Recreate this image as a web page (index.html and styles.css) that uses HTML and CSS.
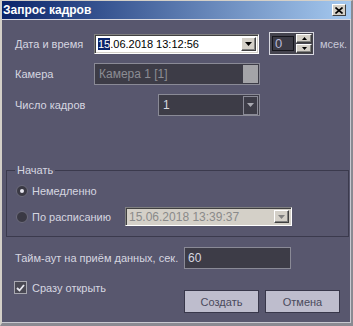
FILE: index.html
```html
<!DOCTYPE html>
<html lang="ru">
<head>
<meta charset="utf-8">
<title>Запрос кадров</title>
<link rel="stylesheet" href="styles.css">
</head>
<body>
<div class="window">
  <div class="titlebar">
    <span class="title">Запрос кадров</span>
    <span class="close"><svg width="8" height="7" viewBox="0 0 8 7"><path d="M0.5 0.5 L7.5 6.5 M7.5 0.5 L0.5 6.5" stroke="#000" stroke-width="1.6"/></svg></span>
  </div>
  <div class="content">
    <div class="row r1">
      <span class="lbl w79">Дата и время</span>
      <div class="combo date">
        <span class="val"><span class="sel">15</span>.06.2018 13:12:56</span>
        <span class="ddbtn raised"><svg width="7" height="4" viewBox="0 0 7 4"><path d="M0 0 H7 L3.5 4 Z" fill="#000"/></svg></span>
      </div>
      <div class="spin">
        <span class="spinval">0</span>
        <span class="spinbtns">
          <span class="sb raised"><svg width="5" height="3" viewBox="0 0 5 3"><path d="M0 3 H5 L2.5 0 Z" fill="#000"/></svg></span>
          <span class="sb raised"><svg width="5" height="3" viewBox="0 0 5 3"><path d="M0 0 H5 L2.5 3 Z" fill="#000"/></svg></span>
        </span>
      </div>
      <span class="unit">мсек.</span>
    </div>
    <div class="row r2">
      <span class="lbl w79">Камера</span>
      <div class="combo dark camera">
        <span class="val dim">Камера 1 [1]</span>
        <span class="grayblock"></span>
      </div>
    </div>
    <div class="row r3">
      <span class="lbl w143">Число кадров</span>
      <div class="combo dark count">
        <span class="val">1</span>
        <span class="ddbtn flat"><svg width="7" height="4" viewBox="0 0 7 4"><path d="M0 0 H7 L3.5 4 Z" fill="#a8a8b0"/></svg></span>
      </div>
    </div>
    <fieldset class="group">
      <legend>Начать</legend>
      <div class="row radiorow first">
        <span class="radio on"><span class="dot"></span></span>
        <span>Немедленно</span>
      </div>
      <div class="row radiorow second">
        <span class="radiolbl">
          <span class="radio"></span>
          <span>По расписанию</span>
        </span>
        <div class="combo disabled">
          <span class="val">15.06.2018 13:39:37</span>
          <span class="ddbtn raised"><svg width="7" height="4" viewBox="0 0 7 4"><path d="M0 0 H7 L3.5 4 Z" fill="#808080"/></svg></span>
        </div>
      </div>
    </fieldset>
    <div class="row r4">
      <span class="lbl w169">Тайм-аут на приём данных, сек.</span>
      <div class="edit">60</div>
    </div>
    <div class="row bottom">
      <span class="check">
        <span class="box"><svg width="9" height="8" viewBox="0 0 9 8"><path d="M1 4 L3.5 6.5 L8 1" fill="none" stroke="#e8e8f0" stroke-width="1.8"/></svg></span>
        <span>Сразу открыть</span>
      </span>
      <div class="buttons">
        <button class="btn">Создать</button>
        <button class="btn">Отмена</button>
      </div>
    </div>
  </div>
</div>
</body>
</html>
```
FILE: styles.css
```css
html, body {
  margin: 0;
  padding: 0;
  background: #ffffff;
}

.window {
  box-sizing: border-box;
  width: 353px;
  height: 326px;
  overflow: hidden;
  background: #58576e;
  border-style: solid;
  border-width: 1px 2px 3px 2px;
  border-color: #d4d0c8 #8a8a92 #8a8a92 #d4d0c8;
  box-shadow: inset -1px -1px 0 #c8c8d0;
  font-family: "Liberation Sans", Arial, sans-serif;
  font-size: 11px;
  color: #d6d6e0;
}

.titlebar {
  height: 18px;
  border-bottom: 1px solid #d8d8e0;
  background: linear-gradient(to right, #0a246a, #a6caf0);
  display: flex;
  align-items: center;
  justify-content: space-between;
  padding: 0 5px 0 1px;
}

.title {
  color: #ffffff;
  font-weight: bold;
  font-size: 12px;
}

.close {
  box-sizing: border-box;
  width: 14px;
  height: 12px;
  background: #d4d0c8;
  border: 1px solid;
  border-color: #ffffff #404040 #404040 #ffffff;
  display: flex;
  align-items: center;
  justify-content: center;
}

.content {
  padding-left: 13px;
}

.row {
  display: flex;
  align-items: center;
}

.lbl { flex: none; }
.w79 { width: 79px; }
.w143 { width: 143px; }
.w169 { width: 169px; }

.r1 { margin-top: 12px; height: 23px; }
.r2 { margin-top: 8px; height: 22px; }
.r3 { margin-top: 9px; height: 22px; }

.combo {
  box-sizing: border-box;
  display: flex;
  align-items: stretch;
  justify-content: space-between;
  flex: none;
}

.combo .val {
  display: flex;
  align-items: center;
  white-space: nowrap;
}

.date {
  width: 165px;
  height: 20px;
  background: #ffffff;
  color: #000000;
  border: 1px solid;
  border-color: #808080 #ffffff #ffffff #808080;
  box-shadow: inset 1px 1px 0 #404040, inset -1px -1px 0 #d4d0c8;
  padding: 2px 2px 2px 3px;
}

.sel {
  background: #0a246a;
  color: #ffffff;
}

.ddbtn {
  box-sizing: border-box;
  width: 15px;
  display: flex;
  align-items: center;
  justify-content: center;
}

.raised {
  background: #d4d0c8;
  border: 1px solid;
  border-color: #ffffff #404040 #404040 #ffffff;
  box-shadow: inset -1px -1px 0 #808080;
}

.spin {
  box-sizing: border-box;
  width: 45px;
  height: 23px;
  margin-left: 10px;
  display: flex;
  align-items: center;
  border: 1px solid #d8d8e0;
  background: #45444f;
  padding: 1px 1px 1px 2px;
  gap: 2px;
}

.spinval {
  box-sizing: border-box;
  width: 23px;
  height: 15px;
  border: 1px solid #15151c;
  background: #3c3b46;
  color: #b8b8d8;
  font-size: 13px;
  line-height: 13px;
  padding-left: 2px;
}

.spinbtns {
  display: flex;
  flex-direction: column;
  gap: 1px;
  width: 16px;
  height: 100%;
}

.sb {
  box-sizing: border-box;
  flex: 1;
  display: flex;
  align-items: center;
  justify-content: center;
}

.unit {
  margin-left: 6px;
  color: #c8c8d8;
}

.dark {
  background: #3d3c47;
  border: 1px solid #8a8a96;
}

.camera {
  width: 166px;
  height: 22px;
  padding: 1px 1px 1px 4px;
}

.dim { color: #8c8c94; font-size: 12px; }

.grayblock {
  width: 15px;
  background: #a4a4a8;
}

.count {
  width: 102px;
  height: 22px;
  padding: 1px 1px 1px 4px;
  color: #d8d8e0;
  font-size: 12px;
}

.flat {
  border: 1px solid #8a8a96;
  height: 19px;
  align-self: center;
}

.group {
  box-sizing: border-box;
  width: 343px;
  margin: 47px 0 0 -9px;
  border: 1px solid #3b3a4d;
  padding: 4px 8px 10px 9px;
}

.group legend {
  margin-left: -1px;
  padding: 0 2px;
  line-height: 14px;
  font-size: 11px;
  color: #d6d6e0;
}

.radiorow.first { height: 20px; }
.radiorow.second { height: 19px; margin-top: 6px; }

.radio {
  box-sizing: border-box;
  width: 12px;
  height: 12px;
  border-radius: 50%;
  background: #3a3944;
  border: 1px solid #6c6b7c;
  margin-right: 4px;
  display: flex;
  align-items: center;
  justify-content: center;
  flex: none;
}

.dot {
  width: 4px;
  height: 4px;
  border-radius: 50%;
  background: #e8e8f0;
}

.radiolbl {
  width: 109px;
  display: flex;
  align-items: center;
  flex: none;
}

.disabled {
  width: 167px;
  height: 19px;
  background: #d4d0c8;
  color: #8a8a8a;
  border: 1px solid;
  border-color: #808080 #ffffff #ffffff #808080;
  box-shadow: inset 1px 1px 0 #404040, inset -1px -1px 0 #d4d0c8;
  padding: 2px 2px 2px 3px;
  font-size: 12px;
}

.r4 { margin-top: 10px; height: 22px; }

.edit {
  box-sizing: border-box;
  width: 107px;
  height: 22px;
  background: #3d3c47;
  border: 1px solid #8a8a96;
  color: #d8d8e0;
  font-size: 12px;
  padding-left: 3px;
  display: flex;
  align-items: center;
}

.bottom {
  margin-top: 12px;
  align-items: flex-start;
}

.check {
  width: 170px;
  margin-left: -1px;
  display: flex;
  align-items: center;
  height: 13px;
}

.box {
  box-sizing: border-box;
  width: 13px;
  height: 13px;
  border: 1px solid #a8a8b0;
  background: #4a4954;
  margin-right: 5px;
  display: flex;
  align-items: center;
  justify-content: center;
  flex: none;
}

.buttons {
  display: flex;
  gap: 6px;
  margin-top: 9px;
}

.btn {
  box-sizing: border-box;
  width: 75px;
  height: 23px;
  background: #bebdcd;
  border: 1px solid #38374a;
  color: #4a4a5c;
  font-family: "Liberation Sans", Arial, sans-serif;
  font-size: 11px;
  padding: 0;
}
```
